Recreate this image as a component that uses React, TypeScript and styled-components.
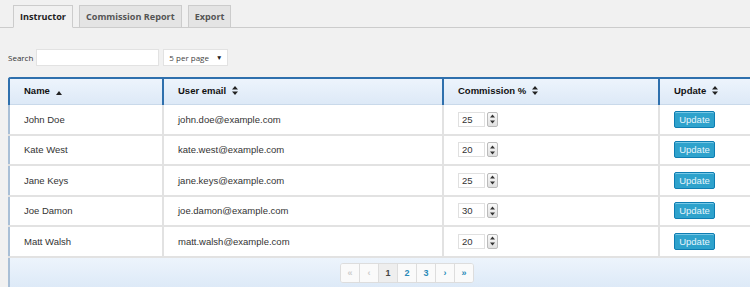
import React from "react";
import styled, { createGlobalStyle } from "styled-components";

const Global = createGlobalStyle`
  html, body { margin: 0; padding: 0; background: #f1f1f1; overflow: hidden; }
  body { width: 750px; height: 287px; }
`;

const Page = styled.div`
  width: 750px;
  height: 287px;
  overflow: hidden;
  font-family: "Liberation Sans", Arial, sans-serif;
`;

const TabBar = styled.div`
  display: flex;
  align-items: flex-end;
  gap: 6px;
  height: 28px;
  padding-left: 13px;
  border-bottom: 1px solid #ccc;
  box-sizing: border-box;
`;

const Tab = styled.div<{ $active?: boolean }>`
  height: ${(p) => (p.$active ? "23px" : "22px")};
  margin-bottom: ${(p) => (p.$active ? "-1px" : "0")};
  padding: 0 6px;
  display: flex;
  align-items: center;
  border: 1px solid #ccc;
  border-bottom: ${(p) => (p.$active ? "1px solid #f1f1f1" : "none")};
  background: ${(p) => (p.$active ? "#f1f1f1" : "#e4e4e4")};
  color: ${(p) => (p.$active ? "#222" : "#555")};
  font-family: "Open Sans", sans-serif;
  font-weight: 700;
  font-size: 9.1px;
  box-sizing: border-box;
`;

const Controls = styled.div`
  display: flex;
  align-items: center;
  gap: 3px;
  margin-top: 21px;
  padding-left: 8px;
  height: 17px;
  font-family: "Open Sans", sans-serif;
`;

const Label = styled.span`
  font-size: 8px;
  color: #333;
`;

const SearchInput = styled.div`
  width: 123px;
  height: 17px;
  background: #fff;
  border: 1px solid #e2e2e2;
  box-sizing: border-box;
`;

const Select = styled.div`
  margin-left: 1px;
  width: 65px;
  height: 17px;
  background: #fff;
  border: 1px solid #e2e2e2;
  box-sizing: border-box;
  display: flex;
  align-items: center;
  justify-content: space-between;
  padding: 0 5px 0 5px;
  font-size: 8px;
  color: #444;
`;

const Caret = styled.span`
  font-size: 6.5px;
  color: #222;
`;

const TableWrap = styled.div`
  margin: 11px 0 0 8px;
  width: 760px;
  border-top-left-radius: 3px;
  overflow: hidden;
`;

const Grid = styled.table`
  border-collapse: collapse;
  width: 760px;
  table-layout: fixed;
`;

const Th = styled.th<{ $w: number }>`
  width: ${(p) => p.$w}px;
  height: 26px;
  box-sizing: border-box;
  padding: 0 0 0 14px;
  text-align: left;
  font-size: 9.5px;
  font-weight: 700;
  color: #111;
  background: linear-gradient(#edf4fc, #dde9f7);
  border-top: 2px solid #2f70ad;
  border-left: 2px solid #2f70ad;
  border-bottom: 1px solid #c9d9ea;
`;

const SortIcon = styled.span`
  display: inline-block;
  margin-left: 6px;
  vertical-align: middle;
`;

const Td = styled.td`
  height: 30.5px;
  padding: 0 0 0 14px;
  font-size: 9.5px;
  color: #333;
  background: #fff;
  border-bottom: 2px solid #e2e2e2;
  border-left: 2px solid #e2e2e2;
  &:first-child { border-left: 2px solid #a9bfd6; }
  box-sizing: border-box;
`;

const NumBox = styled.div`
  display: flex;
  align-items: center;
  gap: 2px;
`;

const NumInput = styled.div`
  width: 27px;
  height: 15px;
  border: 1px solid #e0e0e0;
  box-sizing: border-box;
  background: #fff;
  font-size: 9.5px;
  color: #333;
  display: flex;
  align-items: center;
  padding-left: 3px;
`;

const Spin = styled.div`
  width: 11px;
  height: 15px;
  border: 1px solid #bbb;
  border-radius: 2px;
  box-sizing: border-box;
  background: linear-gradient(#fafafa, #e0e0e0);
  display: flex;
  align-items: center;
  justify-content: center;
`;

const UpdateButton = styled.button`
  width: 41px;
  height: 17px;
  padding: 0;
  background: #2ea2cc;
  border: 1px solid #0e7db2;
  border-radius: 2px;
  color: #e6f4fb;
  font-family: "Liberation Sans", Arial, sans-serif;
  font-size: 9.5px;
  box-shadow: inset 0 1px 0 #78c8e6;
`;

const Footer = styled.div`
  height: 31px;
  background: linear-gradient(#edf4fc, #dce9f7);
  border-left: 2px solid #a9bfd6;
  display: flex;
  align-items: center;
  padding-left: 330px;
`;

const Pager = styled.div`
  display: flex;
  border: 1px solid #ddd;
  border-radius: 3px;
  overflow: hidden;
  background: #fff;
`;

const PageBtn = styled.div<{ $state?: "active" | "disabled" | "normal" }>`
  width: 18px;
  height: 18px;
  display: flex;
  align-items: center;
  justify-content: center;
  font-size: 9px;
  font-weight: 700;
  border-left: 1px solid #ddd;
  &:first-child { border-left: none; }
  background: ${(p) => (p.$state === "active" ? "#eee" : "#fafafa")};
  color: ${(p) =>
    p.$state === "active" ? "#444" : p.$state === "disabled" ? "#ccc" : "#2a8ab8"};
`;

const SortBoth = () => (
  <svg width="6" height="9" viewBox="0 0 6 9">
    <path d="M3 0 L6 3.5 H0 Z M3 9 L6 5.5 H0 Z" fill="#222" />
  </svg>
);
const SortUp = () => (
  <svg width="6" height="4" viewBox="0 0 6 4">
    <path d="M3 0 L6 4 H0 Z" fill="#222" />
  </svg>
);

const SpinIcon = () => (
  <svg width="5" height="10" viewBox="0 0 5 10">
    <path d="M2.5 0.5 L5 3.5 H0 Z M2.5 9.5 L5 6.5 H0 Z" fill="#333" />
  </svg>
);

const rows = [
  ["John Doe", "john.doe@example.com", "25"],
  ["Kate West", "kate.west@example.com", "20"],
  ["Jane Keys", "jane.keys@example.com", "25"],
  ["Joe Damon", "joe.damon@example.com", "30"],
  ["Matt Walsh", "matt.walsh@example.com", "20"],
];

export default function App() {
  return (
    <Page>
      <Global />
      <TabBar>
        <Tab $active>Instructor</Tab>
        <Tab>Commission Report</Tab>
        <Tab>Export</Tab>
      </TabBar>
      <Controls>
        <Label>Search</Label>
        <SearchInput />
        <Select>
          <span>5 per page</span>
          <Caret>▼</Caret>
        </Select>
      </Controls>
      <TableWrap>
        <Grid>
          <thead>
            <tr>
              <Th $w={154}>
                Name
                <SortIcon><SortUp /></SortIcon>
              </Th>
              <Th $w={280}>
                User email
                <SortIcon><SortBoth /></SortIcon>
              </Th>
              <Th $w={216}>
                Commission %
                <SortIcon><SortBoth /></SortIcon>
              </Th>
              <Th $w={110}>
                Update
                <SortIcon><SortBoth /></SortIcon>
              </Th>
            </tr>
          </thead>
          <tbody>
            {rows.map(([n, e, c]) => (
              <tr key={n}>
                <Td>{n}</Td>
                <Td>{e}</Td>
                <Td>
                  <NumBox>
                    <NumInput>{c}</NumInput>
                    <Spin><SpinIcon /></Spin>
                  </NumBox>
                </Td>
                <Td>
                  <UpdateButton>Update</UpdateButton>
                </Td>
              </tr>
            ))}
          </tbody>
        </Grid>
        <Footer>
          <Pager>
            <PageBtn $state="disabled">«</PageBtn>
            <PageBtn $state="disabled">‹</PageBtn>
            <PageBtn $state="active">1</PageBtn>
            <PageBtn>2</PageBtn>
            <PageBtn>3</PageBtn>
            <PageBtn>›</PageBtn>
            <PageBtn>»</PageBtn>
          </Pager>
        </Footer>
      </TableWrap>
    </Page>
  );
}
